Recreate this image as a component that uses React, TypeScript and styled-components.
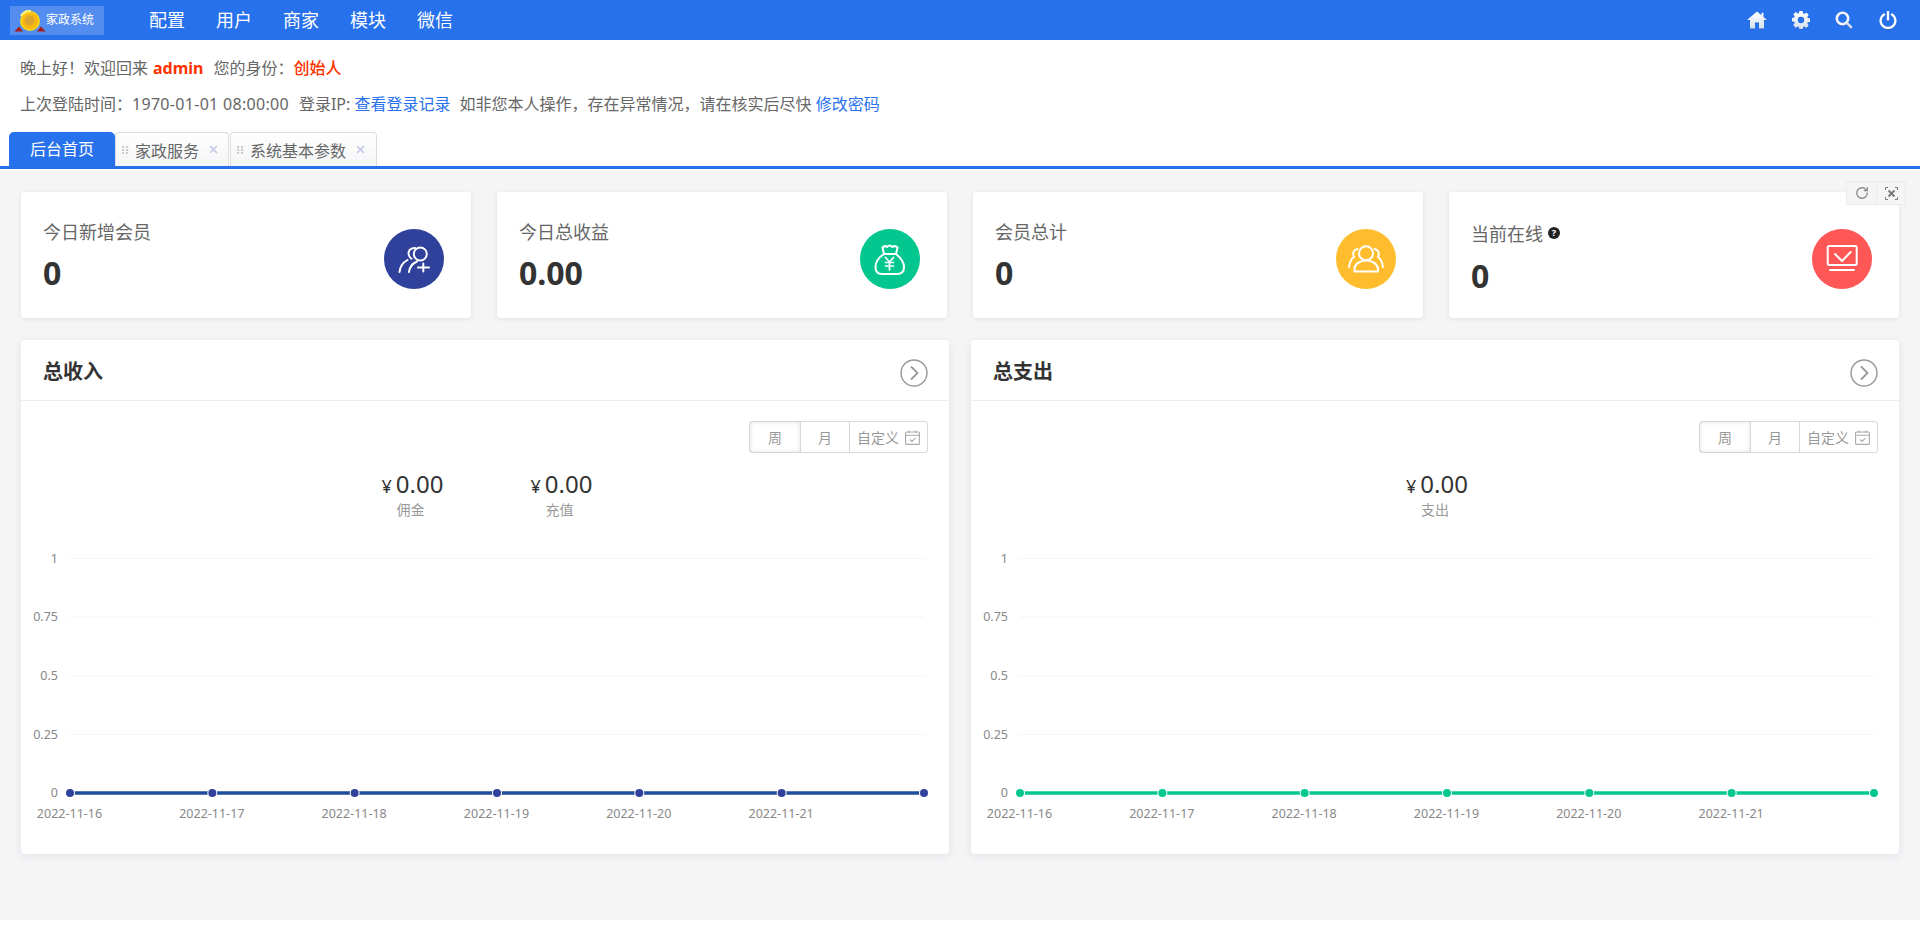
import React from "react";
import styled, { createGlobalStyle } from "styled-components";
import { RotateCw } from "lucide-react";

const Global = createGlobalStyle`
  html, body { margin: 0; padding: 0; background: #fff; }
  body { font-family: "Noto Sans", "Noto Sans CJK SC", sans-serif; color: #666; overflow: hidden; }
  #root { width: 1920px; height: 933px; overflow: hidden; }
  * { box-sizing: border-box; }
`;

const TopBar = styled.header`
  height: 40px; background: #2871ec; display: flex; align-items: center; color: #fff;
`;
const Logo = styled.div`
  width: 94px; height: 29px; margin-left: 10px; background: rgba(255,255,255,.2);
  display: flex; align-items: center; position: relative;
`;
const LogoText = styled.span`
  position: absolute; left: 36px; top: 5px; font-size: 12px; line-height: 18px; color: #fff;
  white-space: nowrap;
`;
const Nav = styled.nav`
  display: flex; margin-left: 45px; gap: 31px;
`;
const NavItem = styled.a`
  font-size: 18px; line-height: 40px; color: #fff; white-space: nowrap;
`;
const TopIcons = styled.div`
  margin-left: auto; padding-right: 10px; display: flex;
`;
const TopIcon = styled.span`
  width: 43.7px; height: 40px; display: flex; align-items: center; justify-content: center;
  svg { filter: drop-shadow(0 1px 0 rgba(0,0,0,.12)); }
`;

const Info = styled.section`
  height: 92px; padding: 18px 0 0 20px; font-size: 16px; line-height: 20px; color: #666;
`;
const InfoLine = styled.div`
  height: 36px; white-space: nowrap;
`;
const Hot = styled.span<{ $bold?: boolean }>`
  color: #ff3300; font-weight: ${p => (p.$bold ? 700 : 500)}; margin: 0 ${p => (p.$bold ? 4 : 0)}px 0 ${p => (p.$bold ? 5 : 0)}px;
`;
const Link = styled.a`
  color: #2a72ee;
`;
const Spaced = styled.span<{ $gap: number }>`
  margin-left: ${p => p.$gap}px;
`;
const Stamp = styled.span`
  letter-spacing: .3px;
`;

const Tabs = styled.div`
  height: 37px; border-bottom: 3px solid #2871ec; display: flex; padding-left: 9px;
`;
const ActiveTab = styled.div`
  width: 106px; height: 34px; background: #2871ec; color: #fff; border-radius: 5px 5px 0 0;
  font-size: 16px; line-height: 34px; text-align: center;
`;
const Tab = styled.div<{ $w: number }>`
  width: ${p => p.$w}px; height: 34px; border: 1px solid #ddd; border-bottom: 0;
  border-radius: 4px 4px 0 0; background: linear-gradient(#fff, #f4f5f6);
  display: flex; align-items: center; padding-left: 6px; font-size: 16px; color: #666; gap: 6px;
  margin-right: 1px;
`;

const Main = styled.main`
  height: 749px; margin-top: 2px; background: #f5f5f6; padding: 21px 21px 0; position: relative;
`;
const Tools = styled.div`
  position: absolute; left: 1846px; top: 10px; height: 24px; display: flex; z-index: 2;
  background: #f5f5f5; border: 1px solid #ececec;
`;
const Tool = styled.span`
  width: 29px; display: flex; align-items: center; justify-content: center; color: #888;
  & + & { border-left: 1px solid #ececec; }
`;
const Cards = styled.div`
  display: grid; grid-template-columns: repeat(4, 450px); column-gap: 26px;
`;
const Card = styled.div`
  height: 126px; background: #fff; border-radius: 4px; position: relative;
  box-shadow: 0 1px 4px rgba(150,160,190,.22);
`;
const CardLabel = styled.div<{ $low?: boolean }>`
  position: absolute; left: 22px; top: ${p => (p.$low ? 29 : 27)}px; font-size: 18px; line-height: 27px;
  color: #666; display: flex; align-items: center; white-space: nowrap;
`;
const CardValue = styled.div<{ $low?: boolean }>`
  position: absolute; left: 22px; top: ${p => (p.$low ? 60 : 57)}px; font-size: 32px; line-height: 48px;
  font-weight: 700; color: #333;
`;
const Circle = styled.div<{ $bg: string }>`
  position: absolute; left: 363px; top: 37px; width: 60px; height: 60px; border-radius: 50%;
  background: ${p => p.$bg};
`;
const Help = styled.span`
  width: 12px; height: 12px; border-radius: 50%; background: #222; color: #fff; font-size: 9px;
  line-height: 12px; text-align: center; font-weight: 700; margin-left: 5px; margin-top: -3px;
`;

const Panels = styled.div`
  display: grid; grid-template-columns: 928px 928px; column-gap: 22px; margin-top: 22px;
`;
const Panel = styled.div`
  height: 514px; background: #fff; border-radius: 4px; position: relative;
  box-shadow: 0 2px 8px rgba(150,160,190,.2);
`;
const PanelHead = styled.div`
  height: 61px; border-bottom: 1px solid #eceef4; display: flex; align-items: center;
  justify-content: space-between; padding: 5px 21px 0 22px;
`;
const PanelTitle = styled.h2`
  margin: -2px 0 0; font-size: 20px; line-height: 30px; font-weight: 700; color: #333;
`;
const Arrow = styled.span`
  width: 28px; height: 28px; display: block;
`;
const RangeRow = styled.div`
  display: flex; justify-content: flex-end; padding: 20px 21px 0 0;
`;
const Range = styled.div`
  display: flex; height: 32px; border: 1px solid #d8d8d8; border-radius: 3px; color: #999; font-size: 14px;
`;
const RangeCell = styled.span<{ $w: number; $on?: boolean }>`
  width: ${p => p.$w}px; display: flex; align-items: center; justify-content: center; gap: 6px;
  white-space: nowrap;
  ${p => (p.$on ? "box-shadow: inset 0 0 4px rgba(0,0,0,.13);" : "")}
  & + & { border-left: 1px solid #d8d8d8; }
`;
const Stats = styled.div`
  display: flex; justify-content: center; margin-top: 13px;
`;
const Stat = styled.div`
  width: 149px; text-align: center;
`;
const StatValue = styled.div`
  font-size: 24px; line-height: 36px; color: #333; white-space: nowrap; padding-left: 4px;
`;
const Yen = styled.span`
  font-size: 18px; margin-right: 4px;
`;
const StatLabel = styled.div`
  font-size: 14px; line-height: 20px; color: #999; margin-top: -4px;
`;
const ChartBox = styled.svg`
  position: absolute; left: 0; top: 190px; display: block;
`;
const AxisText = styled.text`
  font-size: 12.5px; fill: #888; font-family: "Noto Sans", sans-serif;
`;

const Medal = () => (
  <svg width="32" height="24" viewBox="0 0 32 24" style={{ marginLeft: 4, marginTop: 3 }}>
    <path d="M0.5 21.5L5 16.5L9 21.5ZM31.5 21.5L27 16.5L23 21.5Z" fill="#a81c1c" />
    <circle cx="16" cy="11" r="10" fill="#f7d21e" />
    <circle cx="16" cy="11" r="8" fill="#f9b70f" />
    <circle cx="15.5" cy="10.5" r="5" fill="#d9a531" />
    <path d="M7 6a10 10 0 0 1 10-5" stroke="#fff27a" strokeWidth="2" fill="none" />
  </svg>
);

const HomeIcon = () => (
  <svg width="20" height="18" viewBox="0 0 20 18">
    <defs><linearGradient id="tg" x1="0" y1="0" x2="0" y2="1"><stop offset="0" stopColor="#fff" /><stop offset="1" stopColor="#d5deee" /></linearGradient></defs>
    <path d="M10 0.5L14.5 4.3V1.8H16.5V6L20 9H17V17.5H12V11.5H8V17.5H3V9H0Z" fill="url(#tg)" />
  </svg>
);
const GearIcon = () => (
  <svg width="18" height="18" viewBox="0 0 18 18">
    <defs><linearGradient id="tg2" x1="0" y1="0" x2="0" y2="1"><stop offset="0" stopColor="#fff" /><stop offset="1" stopColor="#d5deee" /></linearGradient></defs>
    <path fillRule="evenodd" fill="url(#tg2)" d="M7.3 0h3.4l.4 2.4 1.2.5 2-1.4 2.4 2.4-1.4 2 .5 1.2 2.2.4v3.4l-2.2.4-.5 1.2 1.4 2-2.4 2.4-2-1.4-1.2.5-.4 2.4H7.3l-.4-2.4-1.2-.5-2 1.4L1.3 14l1.4-2-.5-1.2L0 10.4V7l2.2-.4.5-1.2-1.4-2 2.4-2.4 2 1.4 1.2-.5zM9 5.8a3.2 3.2 0 1 0 0 6.4 3.2 3.2 0 0 0 0-6.4z" />
  </svg>
);
const SearchIcon = () => (
  <svg width="18" height="18" viewBox="0 0 18 18" fill="none">
    <circle cx="7.5" cy="7.5" r="5.7" stroke="#f2f5fb" strokeWidth="2.6" />
    <path d="M11.8 11.8L16.8 16.8" stroke="#d5deee" strokeWidth="2.6" />
  </svg>
);
const PowerIcon = () => (
  <svg width="18" height="18" viewBox="0 0 18 18" fill="none">
    <path d="M5 3.4a7.4 7.4 0 1 0 8 0" stroke="#fff" strokeWidth="2.4" strokeLinecap="round" />
    <path d="M9 .8V8.4" stroke="#fff" strokeWidth="2.4" strokeLinecap="round" />
  </svg>
);
const Grip = () => (
  <svg width="7" height="8" viewBox="0 0 7 8" fill="#ccc">
    {[0, 3, 6].map(y => [0, 4].map(x => <rect key={`${x}${y}`} x={x} y={y} width="2.2" height="2" />))}
  </svg>
);
const Close = () => (
  <svg width="9" height="9" viewBox="0 0 9 9" style={{ marginLeft: 4 }}>
    <path d="M1 1l7 7M8 1L1 8" stroke="#c3c6e6" strokeWidth="1.5" />
  </svg>
);
const FullIcon = () => (
  <svg width="13" height="13" viewBox="0 0 13 13" fill="none" stroke="#777" strokeWidth="1">
    <path d="M.5 3V.5H3M10 .5h2.5V3M12.5 10v2.5H10M3 12.5H.5V10" />
    <path d="M3.5 3.5l6 6M9.5 3.5l-6 6" strokeWidth="1.8" />
  </svg>
);

const s = { fill: "none", stroke: "#fff", strokeWidth: 2, strokeLinecap: "round" as const, strokeLinejoin: "round" as const };
const IconAdd = () => (
  <svg width="60" height="60" viewBox="0 0 60 60" {...s}>
    <circle cx="36.3" cy="25" r="6.5" />
    <path d="M25 43C25.5 38 28.5 34.5 33 32.5M31 19C26 18.5 23.5 22.5 25 26.5C25.5 28 26.5 29 27.5 29.7M15.5 43C16 37.5 19 33.5 23.5 31M39.3 34.5V42.5M34 38.5H45" />
  </svg>
);
const IconBag = () => (
  <svg width="60" height="60" viewBox="0 0 60 60" {...s}>
    <path d="M24 25C18 29 15.5 34 15.5 38C15.5 43 18 45 22 45H37C41 45 44 43 44 38C44 34 41 29 36 25H24L22.5 18.5Q25 16 27 18Q30 15 32 18Q35 16 37.5 18.5L36 25" />
    <path d="M25.5 28.5L29.5 33L33.5 28.5M25.5 33.5H33.5M25.5 37H33.5M29.5 33V41" strokeWidth="1.7" />
  </svg>
);
const IconGroup = () => (
  <svg width="60" height="60" viewBox="0 0 60 60" {...s}>
    <circle cx="30" cy="24.3" r="7" />
    <path d="M18.5 42.5V40C18.5 35 24 31.5 30 31.5C36 31.5 42 35 42 40V42.5ZM21.5 20C18 20.5 16 24 18 28C15 30 13.5 34 13 38M38.5 20C42 20.5 44 24 42 28C45 30 46.5 34 47 38" />
  </svg>
);
const IconScreen = () => (
  <svg width="60" height="60" viewBox="0 0 60 60" {...s}>
    <rect x="15.7" y="17" width="29" height="19" rx="1.5" />
    <path d="M23 25L30 32L38.7 23M18 41H42" />
  </svg>
);
const ArrowIcon = () => (
  <Arrow>
    <svg width="28" height="28" viewBox="0 0 28 28" fill="none" stroke="#999" strokeWidth="1.4">
      <circle cx="14" cy="14" r="13" />
      <path d="M11 7.5L17.5 14L11 20.5" strokeWidth="1.8" />
    </svg>
  </Arrow>
);
const CalIcon = () => (
  <svg width="15" height="15" viewBox="0 0 15 15" fill="none" stroke="#aaa" strokeWidth="1.1">
    <rect x=".6" y="2" width="13.8" height="12.4" rx="1" />
    <path d="M.6 5.2H14.4M4 .5V3M11 .5V3M5 9.5l2 2 3.4-3.4" />
  </svg>
);

const dates = ["2022-11-16", "2022-11-17", "2022-11-18", "2022-11-19", "2022-11-20", "2022-11-21"];
const ticks: [string, number][] = [["1", 28.5], ["0.75", 87], ["0.5", 146], ["0.25", 204.5], ["0", 263]];
const xs = [0, 1, 2, 3, 4, 5, 6].map(i => 49 + i * 142.33);

const Chart = ({ color, line }: { color: string; line: string }) => (
  <ChartBox width="928" height="324" viewBox="0 0 928 324">
    {ticks.slice(0, 4).map(([t, y]) => (
      <line key={t} x1="49" x2="903" y1={y} y2={y} stroke="#f5f5f5" strokeWidth="1" />
    ))}
    {ticks.map(([t, y]) => (
      <AxisText key={t} x="37" y={y + 4} textAnchor="end">{t}</AxisText>
    ))}
    <line x1="49" x2="903" y1="263" y2="263" stroke={line} strokeWidth="3.6" />
    {xs.map(x => (
      <circle key={x} cx={x} cy="263" r="4" fill={color} stroke="#fff" strokeWidth="2" paintOrder="stroke" />
    ))}
    {dates.map((d, i) => (
      <AxisText key={d} x={xs[i] - 0.5} y="288" textAnchor="middle">{d}</AxisText>
    ))}
  </ChartBox>
);

const PanelBlock = ({ title, stats, color, line }: { title: string; stats: string[]; color: string; line: string }) => (
  <Panel>
    <PanelHead>
      <PanelTitle>{title}</PanelTitle>
      <ArrowIcon />
    </PanelHead>
    <RangeRow>
      <Range>
        <RangeCell $w={50} $on>周</RangeCell>
        <RangeCell $w={49}>月</RangeCell>
        <RangeCell $w={78}>自定义<CalIcon /></RangeCell>
      </Range>
    </RangeRow>
    <Stats>
      {stats.map(l => (
        <Stat key={l}>
          <StatValue><Yen>¥</Yen>0.00</StatValue>
          <StatLabel>{l}</StatLabel>
        </Stat>
      ))}
    </Stats>
    <Chart color={color} line={line} />
  </Panel>
);

const EX = "\uFF01";
const CO = "\uFF1A";
const CM = "\uFF0C";

export default function App() {
  return (
    <>
      <Global />
      <TopBar>
        <Logo><Medal /><LogoText>家政系统</LogoText></Logo>
        <Nav>
          {["配置", "用户", "商家", "模块", "微信"].map(n => <NavItem key={n}>{n}</NavItem>)}
        </Nav>
        <TopIcons>
          <TopIcon><HomeIcon /></TopIcon>
          <TopIcon><GearIcon /></TopIcon>
          <TopIcon><SearchIcon /></TopIcon>
          <TopIcon><PowerIcon /></TopIcon>
        </TopIcons>
      </TopBar>
      <Info>
        <InfoLine>{`晚上好${EX}欢迎回来`}<Hot $bold>admin</Hot><Spaced $gap={6}>{`您的身份${CO}`}</Spaced><Hot>创始人</Hot></InfoLine>
        <InfoLine>{`上次登陆时间${CO}`}<Stamp>1970-01-01 08:00:00</Stamp><Spaced $gap={10}>登录IP:</Spaced> <Link>查看登录记录</Link><Spaced $gap={9}>{`如非您本人操作${CM}存在异常情况${CM}请在核实后尽快`}</Spaced> <Link>修改密码</Link></InfoLine>
      </Info>
      <Tabs>
        <ActiveTab>后台首页</ActiveTab>
        <Tab $w={114}><Grip />家政服务<Close /></Tab>
        <Tab $w={147}><Grip />系统基本参数<Close /></Tab>
      </Tabs>
      <Main>
        <Tools>
          <Tool><RotateCw size={14} strokeWidth={2.2} /></Tool>
          <Tool><FullIcon /></Tool>
        </Tools>
        <Cards>
          <Card><CardLabel>今日新增会员</CardLabel><CardValue>0</CardValue><Circle $bg="#2f419b"><IconAdd /></Circle></Card>
          <Card><CardLabel>今日总收益</CardLabel><CardValue>0.00</CardValue><Circle $bg="#04c78f"><IconBag /></Circle></Card>
          <Card><CardLabel>会员总计</CardLabel><CardValue>0</CardValue><Circle $bg="#ffbd2e"><IconGroup /></Circle></Card>
          <Card><CardLabel $low>当前在线<Help>?</Help></CardLabel><CardValue $low>0</CardValue><Circle $bg="#ff5656"><IconScreen /></Circle></Card>
        </Cards>
        <Panels>
          <PanelBlock title="总收入" stats={["佣金", "充值"]} color="#2f419b" line="#1f4d9c" />
          <PanelBlock title="总支出" stats={["支出"]} color="#04c78f" line="#04c78f" />
        </Panels>
      </Main>
    </>
  );
}
